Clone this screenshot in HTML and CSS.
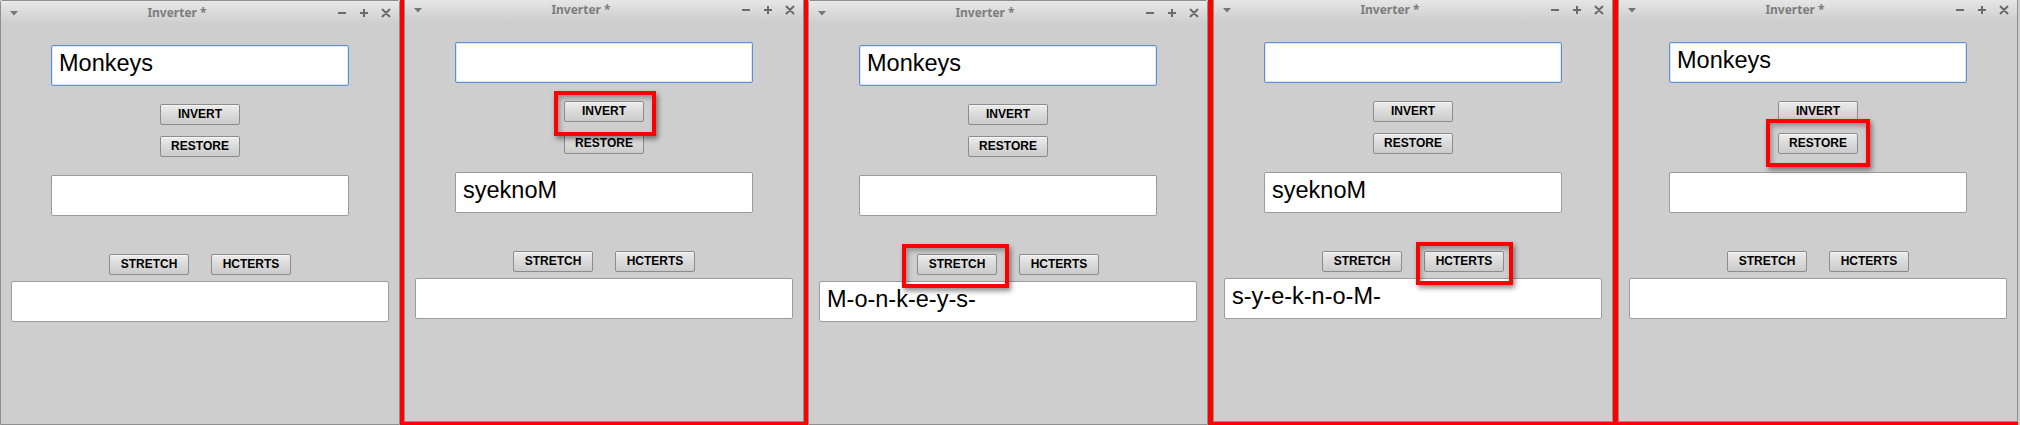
FILE: index.html
```html
<!DOCTYPE html>
<html lang="en">
<head>
    <meta charset="UTF-8">
    <title>Inverter</title>
    <link rel="stylesheet" href="styles.css">
</head>
<body>
    <div class="strip">
        <!-- 1: typed text -->
        <div class="shot">
            <div class="window">
                <div class="titlebar">
                    <svg class="menu-arrow" width="8" height="5" viewBox="0 0 8 5"><path d="M0 0h8L4 4.5z" fill="#757575"/></svg>
                    <span class="title">Inverter *</span>
                    <svg class="controls" width="56" height="22" viewBox="0 0 56 22"><path d="M2 12h8M24 12h8M28 8v8M46 8l8 8M54 8l-8 8" stroke="#6b6b6b" stroke-width="2" fill="none"/></svg>
                </div>
                <div class="field focused">Monkeys</div>
                <button class="btn invert">INVERT</button>
                <button class="btn restore">RESTORE</button>
                <div class="field middle"></div>
                <div class="btn-row">
                    <button class="btn">STRETCH</button>
                    <button class="btn">HCTERTS</button>
                </div>
                <div class="field wide"></div>
            </div>
        </div>
        <div class="sep"></div>
        <!-- 2: invert clicked -->
        <div class="shot framed">
            <div class="window">
                <div class="titlebar">
                    <svg class="menu-arrow" width="8" height="5" viewBox="0 0 8 5"><path d="M0 0h8L4 4.5z" fill="#757575"/></svg>
                    <span class="title">Inverter *</span>
                    <svg class="controls" width="56" height="22" viewBox="0 0 56 22"><path d="M2 12h8M24 12h8M28 8v8M46 8l8 8M54 8l-8 8" stroke="#6b6b6b" stroke-width="2" fill="none"/></svg>
                </div>
                <div class="field focused"></div>
                <span class="hl-wrap invert">
                    <button class="btn">INVERT</button>
                    <span class="highlight hl-invert"></span>
                </span>
                <button class="btn restore">RESTORE</button>
                <div class="field middle">syeknoM</div>
                <div class="btn-row">
                    <button class="btn">STRETCH</button>
                    <button class="btn">HCTERTS</button>
                </div>
                <div class="field wide"></div>
            </div>
        </div>
        <div class="sep"></div>
        <!-- 3: stretch clicked -->
        <div class="shot">
            <div class="window">
                <div class="titlebar">
                    <svg class="menu-arrow" width="8" height="5" viewBox="0 0 8 5"><path d="M0 0h8L4 4.5z" fill="#757575"/></svg>
                    <span class="title">Inverter *</span>
                    <svg class="controls" width="56" height="22" viewBox="0 0 56 22"><path d="M2 12h8M24 12h8M28 8v8M46 8l8 8M54 8l-8 8" stroke="#6b6b6b" stroke-width="2" fill="none"/></svg>
                </div>
                <div class="field focused">Monkeys</div>
                <button class="btn invert">INVERT</button>
                <button class="btn restore">RESTORE</button>
                <div class="field middle"></div>
                <div class="btn-row">
                    <span class="hl-wrap">
                        <button class="btn">STRETCH</button>
                        <span class="highlight hl-stretch"></span>
                    </span>
                    <button class="btn">HCTERTS</button>
                </div>
                <div class="field wide">M-o-n-k-e-y-s-</div>
            </div>
        </div>
        <div class="sep wide"></div>
        <!-- 4: hcterts clicked -->
        <div class="shot framed">
            <div class="window">
                <div class="titlebar">
                    <svg class="menu-arrow" width="8" height="5" viewBox="0 0 8 5"><path d="M0 0h8L4 4.5z" fill="#757575"/></svg>
                    <span class="title">Inverter *</span>
                    <svg class="controls" width="56" height="22" viewBox="0 0 56 22"><path d="M2 12h8M24 12h8M28 8v8M46 8l8 8M54 8l-8 8" stroke="#6b6b6b" stroke-width="2" fill="none"/></svg>
                </div>
                <div class="field focused"></div>
                <button class="btn invert">INVERT</button>
                <button class="btn restore">RESTORE</button>
                <div class="field middle">syeknoM</div>
                <div class="btn-row">
                    <button class="btn">STRETCH</button>
                    <span class="hl-wrap">
                        <button class="btn">HCTERTS</button>
                        <span class="highlight hl-hcterts"></span>
                    </span>
                </div>
                <div class="field wide">s-y-e-k-n-o-M-</div>
            </div>
        </div>
        <div class="sep wide"></div>
        <!-- 5: restore clicked -->
        <div class="shot framed">
            <div class="window">
                <div class="titlebar">
                    <svg class="menu-arrow" width="8" height="5" viewBox="0 0 8 5"><path d="M0 0h8L4 4.5z" fill="#757575"/></svg>
                    <span class="title">Inverter *</span>
                    <svg class="controls" width="56" height="22" viewBox="0 0 56 22"><path d="M2 12h8M24 12h8M28 8v8M46 8l8 8M54 8l-8 8" stroke="#6b6b6b" stroke-width="2" fill="none"/></svg>
                </div>
                <div class="field focused">Monkeys</div>
                <button class="btn invert">INVERT</button>
                <span class="hl-wrap restore">
                    <button class="btn">RESTORE</button>
                    <span class="highlight hl-restore"></span>
                </span>
                <div class="field middle"></div>
                <div class="btn-row">
                    <button class="btn">STRETCH</button>
                    <button class="btn">HCTERTS</button>
                </div>
                <div class="field wide"></div>
            </div>
        </div>
    </div>
</body>
</html>
```

FILE: styles.css
```css
body {
    margin: 0;
    background: #cdcdcd;
    font-family: "Liberation Sans", Arial, sans-serif;
}
.strip {
    display: flex;
    height: 425px;
    overflow: hidden;
}
/* One screenshot of the window */
.shot {
    flex: none;
    width: 400px;
    height: 425px;
    box-sizing: border-box;
    display: flex;
    flex-direction: column;
    justify-content: flex-end;
    overflow: hidden;
}
.shot.framed {
    border-bottom: 3px solid #f00;
}
.sep {
    flex: none;
    width: 4px;
    background: #f00;
}
.sep.wide {
    width: 5px;
}
.window {
    flex: none;
    height: 425px;
    box-sizing: border-box;
    border: 1px solid #8f8f8f;
    border-radius: 3px 3px 0 0;
    background: #cecece;
    display: flex;
    flex-direction: column;
    align-items: center;
}
/* Title bar */
.titlebar {
    align-self: stretch;
    height: 22px;
    display: flex;
    align-items: center;
    background: linear-gradient(#e8e8e8, #d9d9d9 60%, #cfcfcf);
}
.menu-arrow {
    margin-left: 9px;
    margin-top: 2px;
    flex: none;
}
.title {
    flex: 1;
    text-align: center;
    font-family: "Noto Sans", "DejaVu Sans", sans-serif;
    font-weight: 700;
    font-size: 12px;
    color: #7c7c7c;
    padding-top: 1px;
}
.controls {
    flex: none;
    margin-right: 7px;
}
/* Text fields */
.field {
    box-sizing: border-box;
    width: 298px;
    height: 41px;
    margin-top: 18px;
    padding: 3px 7px 0;
    background: #fff;
    border: 1px solid #9c9c9c;
    border-radius: 2px;
    font-size: 23.5px;
    line-height: 28px;
    color: #000;
    white-space: nowrap;
}
.field.focused {
    margin-top: 22px;
    border-color: #5d8fd3;
    box-shadow: inset 0 0 0 1px #dce8f7;
}
.field.wide {
    width: 378px;
    margin-top: 6px;
}
/* Buttons */
.btn {
    box-sizing: border-box;
    width: 80px;
    height: 21px;
    padding: 0;
    border: 1px solid #8c8c8c;
    border-radius: 2px;
    background: linear-gradient(#ececec, #dadada 50%, #cbcbcb);
    font-family: "Liberation Sans", Arial, sans-serif;
    font-weight: 700;
    font-size: 12px;
    line-height: 19px;
    color: #000;
    box-shadow: inset 0 1px 0 #f6f6f6;
}
.invert {
    margin-top: 18px;
}
.restore {
    margin-top: 11px;
}
.btn-row {
    display: flex;
    gap: 22px;
    margin-top: 38px;
}
/* Red callouts drawn over the clicked button */
.hl-wrap {
    position: relative;
    display: flex;
}
.highlight {
    position: absolute;
    border: 4px solid #f00;
    box-shadow: 2px 3px 5px rgba(0,0,0,0.45), inset 2px 3px 5px rgba(0,0,0,0.3);
}
.hl-invert {
    top: -10px;
    left: -10px;
    right: -12px;
    bottom: -14px;
}
.hl-stretch {
    top: -10px;
    left: -15px;
    right: -12px;
    bottom: -13px;
}
.hl-hcterts {
    top: -9px;
    left: -8px;
    right: -9px;
    bottom: -13px;
}
.hl-restore {
    top: -14px;
    left: -12px;
    right: -12px;
    bottom: -13px;
}
```
